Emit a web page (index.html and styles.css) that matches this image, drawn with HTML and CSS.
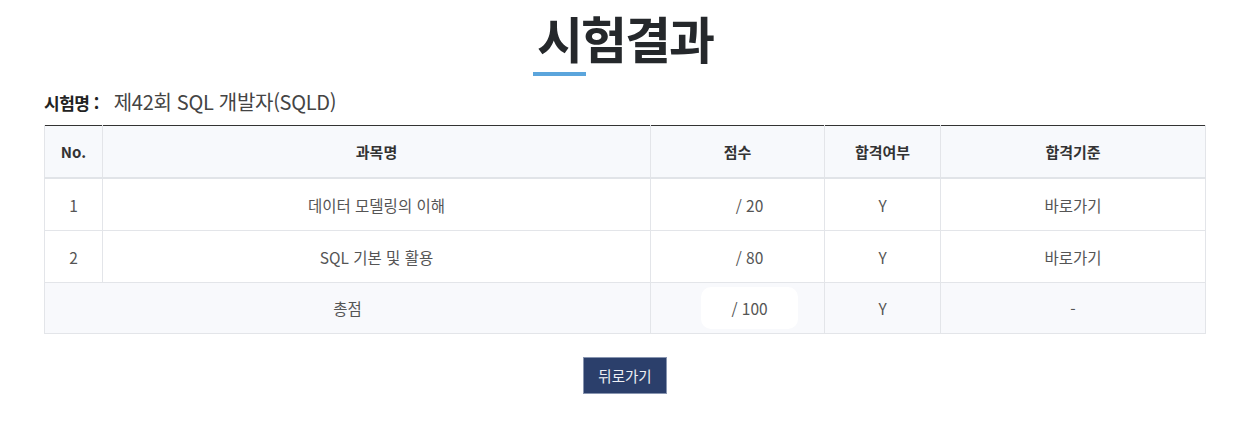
FILE: index.html
```html
<!DOCTYPE html>
<html lang="ko">
<head>
<meta charset="utf-8">
<title>시험결과</title>
<link rel="stylesheet" href="styles.css">
</head>
<body>
<div class="page">
  <h1 class="title"><span class="title-first">시</span>험결과</h1>
  <p class="exam-name"><strong class="exam-label">시험명 :</strong><span class="exam-value">제42회 SQL 개발자(SQLD)</span></p>
  <table class="result">
    <colgroup>
      <col class="c-no"><col class="c-subject"><col class="c-score"><col class="c-pass"><col class="c-crit">
    </colgroup>
    <thead>
      <tr><th>No.</th><th>과목명</th><th>점수</th><th>합격여부</th><th>합격기준</th></tr>
    </thead>
    <tbody>
      <tr><td>1</td><td>데이터 모델링의 이해</td><td class="score"><span class="score-box">/ 20</span></td><td>Y</td><td>바로가기</td></tr>
      <tr><td>2</td><td>SQL 기본 및 활용</td><td class="score"><span class="score-box">/ 80</span></td><td>Y</td><td>바로가기</td></tr>
      <tr class="total"><td colspan="2">총점</td><td class="score"><span class="score-box">/ 100</span></td><td>Y</td><td>-</td></tr>
    </tbody>
  </table>
  <div class="actions"><button class="back-btn" type="button">뒤로가기</button></div>
</div>
</body>
</html>
```
FILE: styles.css
```css
html, body {
  margin: 0;
  padding: 0;
  background: #fff;
}
body {
  font-family: "Noto Sans CJK KR", "Noto Sans", sans-serif;
  color: #555;
}
.page {
  margin: 0 36px 0 44px;
  padding-top: 7px;
}
.title {
  margin: 0;
  text-align: center;
  font-size: 50px;
  line-height: 60px;
  font-weight: 700;
  color: #25282b;
  letter-spacing: -2px;
}
.title-first {
  display: inline-block;
  padding: 0 5px 5px 4px;
  margin: 0 -5px 0 -4px;
  line-height: 60px;
  border-bottom: 4px solid #5ba5dc;
}
.exam-name {
  margin: 14px 0 0;
  line-height: 24px;
}
.exam-label {
  font-size: 17px;
  font-weight: 700;
  color: #222;
  letter-spacing: -0.5px;
}
.exam-value {
  margin-left: 15px;
  font-size: 20px;
  color: #444;
  letter-spacing: -0.3px;
}
.result {
  width: 100%;
  margin-top: 10px;
  border-collapse: collapse;
  table-layout: fixed;
  border-top: 1px solid #333;
  font-size: 15.5px;
}
.c-no { width: 58px; }
.c-score { width: 174px; }
.c-pass { width: 116px; }
.c-crit { width: 265px; }
.result th,
.result td {
  height: 51px;
  padding: 0;
  text-align: center;
  vertical-align: middle;
  border: 1px solid #e3e5e9;
}
.result th {
  height: 51px;
  background: #f7f9fc;
  color: #333;
  font-size: 15px;
  font-weight: 700;
  border-top: none;
  border-bottom: 2px solid #e1e4e8;
}
.result td {
  color: #555;
}
.result .total td {
  height: 50px;
  background: #f8f9fc;
}
.result td.score {
  padding-left: 24px;
}
.score-box {
  display: inline-block;
  padding: 11px 30px;
  line-height: 20px;
  background: #fff;
  border-radius: 10px;
}
.actions {
  display: flex;
  justify-content: center;
  margin-top: 23px;
}
.back-btn {
  width: 84px;
  height: 37px;
  border: 1px solid #8895b0;
  background: #2b3f6b;
  color: #eef0f4;
  font-family: inherit;
  font-size: 14.5px;
  padding: 0;
  cursor: pointer;
}
```
